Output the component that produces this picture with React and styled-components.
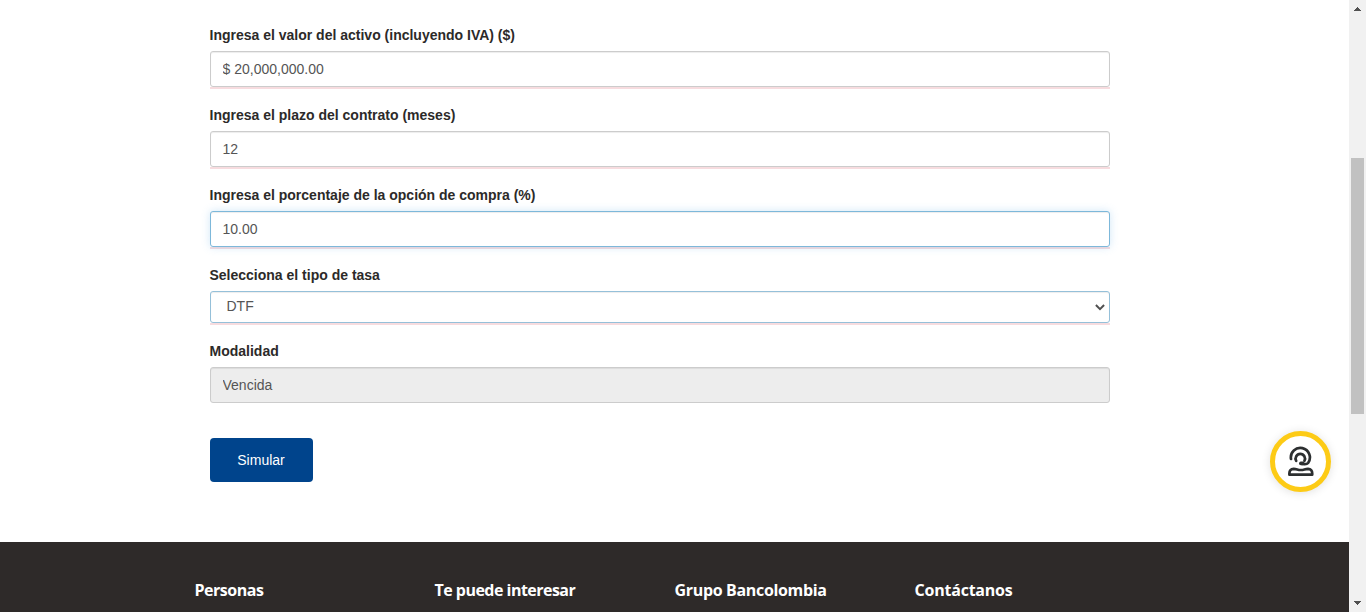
import React from "react";
import styled, { createGlobalStyle } from "styled-components";

const GlobalStyle = createGlobalStyle`
  * { box-sizing: border-box; }
  html, body { margin: 0; height: 612px; overflow: hidden; background: #fff; }
  body { font-family: "Liberation Sans", Arial, sans-serif; font-size: 14px; line-height: 20px; }
`;

const Screen = styled.div`
  display: flex;
  width: 1366px;
  height: 612px;
  overflow: hidden;
`;

const Page = styled.div`
  width: 1349px;
  height: 612px;
  display: flex;
  flex-direction: column;
`;

const Form = styled.form`
  height: 542px;
  width: 1109.5px;
  padding: 25px 0 0 209.5px;
`;

const Field = styled.div`
  margin-bottom: ${(p) => (p.$last ? 0 : 16)}px;
`;

const Label = styled.label`
  display: block;
  height: 26px;
  line-height: 20px;
  font-weight: 700;
  color: #2c2a29;
  white-space: nowrap;
`;

const Underline = styled.div`
  position: relative;
  border-bottom: 2px solid ${(p) => (p.$plain ? "transparent" : "#f7dcdf")};
`;

const control = `
  display: block;
  width: 100%;
  margin: 0;
  border-radius: 3px;
  font-family: "Liberation Sans", Arial, sans-serif;
  font-size: 14px;
  color: #555;
  outline: none;
`;

const Input = styled.input`
  ${control}
  height: 36px;
  padding: 6px 12px;
  background: ${(p) => (p.disabled ? "#ededed" : "#fff")};
  border: 1px solid ${(p) => (p.$active ? "#7db8da" : "#ccc")};
  box-shadow: inset 0 1px 1px rgba(0, 0, 0, 0.075)
    ${(p) => (p.$active ? ", 0 0 8px rgba(102, 175, 233, 0.3)" : "")};
`;

const Select = styled.select`
  ${control}
  appearance: none;
  height: 32px;
  padding: 0 0 2px 16px;
  background: #fff;
  border: 1px solid #95c0d9;
  box-shadow: inset 0 1px 1px rgba(0, 0, 0, 0.075);
`;

const Chevron = styled.svg`
  position: absolute;
  right: 4px;
  top: 11px;
  width: 12px;
  height: 10px;
  pointer-events: none;
`;

const Submit = styled.button`
  display: block;
  width: 103px;
  height: 44px;
  margin: 33px 0 0;
  padding: 0;
  border: 0;
  border-radius: 4px;
  background: #00448c;
  color: #fff;
  font: 14px "Liberation Sans", Arial, sans-serif;
`;

const Footer = styled.footer`
  height: 70px;
  padding: 36px 0 0 194.5px;
  display: grid;
  grid-template-columns: repeat(4, 240px);
  background: #2e2a29;
`;

const FooterTitle = styled.h4`
  margin: 0;
  font: 700 16px/24px "Open Sans", "Noto Sans", sans-serif;
  color: #fff;
  white-space: nowrap;
  letter-spacing: ${(p) => p.$tracking}px;
`;

const Scrollbar = styled.div`
  width: 17px;
  height: 612px;
  background: #f1f1f1;
  display: flex;
  flex-direction: column;
  align-items: center;
`;

const ArrowIcon = styled.svg`
  display: block;
  width: 17px;
  height: 17px;
`;

const Track = styled.div`
  flex: 1;
  width: 13px;
  padding-top: 141px;
`;

const Thumb = styled.div`
  height: 256px;
  background: #c1c1c1;
`;

const ChatButton = styled.div`
  position: absolute;
  left: 1270px;
  top: 431px;
  width: 61px;
  height: 61px;
  border-radius: 50%;
  border: 5px solid #fdcb16;
  background: #fff;
  box-shadow: 0 1px 10px rgba(0, 0, 0, 0.12);
  display: flex;
  align-items: center;
  justify-content: center;
`;

const AgentIcon = () => (
  <svg width="31" height="31" viewBox="0 0 31 31" fill="none" stroke="#2c2f30" strokeWidth="2.7" strokeLinecap="round" strokeLinejoin="round">
    <path d="M6 13a9.5 9.5 0 1 1 17.2 3.8q-1.3 1.5-4 1.3l-3.4-.4" />
    <path d="M11.2 14.9a4.7 4.7 0 1 1 8.2 0" />
    <path d="M15.9 17.4h1.8" strokeWidth="3.6" />
    <path d="M4.4 28.7v-1.4q0-4.1 4.3-4.4c3.4 0 3.6 1.1 7.1 1.1s3.8-1.1 7.2-1.1q4.2.3 4.2 4.4v1.4Z" />
  </svg>
);

const footerTitles = [
  ["Personas", -0.48],
  ["Te puede interesar", -0.52],
  ["Grupo Bancolombia", -0.33],
  ["Contáctanos", -0.22],
];

export default function App() {
  return (
    <>
      <GlobalStyle />
      <Screen>
        <Page>
          <Form>
            <Field>
              <Label>Ingresa el valor del activo (incluyendo IVA) ($)</Label>
              <Underline><Input readOnly value="$ 20,000,000.00" /></Underline>
            </Field>
            <Field>
              <Label>Ingresa el plazo del contrato (meses)</Label>
              <Underline><Input readOnly value="12" /></Underline>
            </Field>
            <Field>
              <Label>Ingresa el porcentaje de la opción de compra (%)</Label>
              <Underline><Input $active readOnly value="10.00" /></Underline>
            </Field>
            <Field>
              <Label>Selecciona el tipo de tasa</Label>
              <Underline>
                <Select defaultValue="DTF"><option>DTF</option></Select>
                <Chevron viewBox="0 0 12 10" fill="none" stroke="#505050" strokeWidth="2">
                  <path d="M1.9 3l4.1 4.1L10.1 3" />
                </Chevron>
              </Underline>
            </Field>
            <Field $last>
              <Label>Modalidad</Label>
              <Underline $plain><Input disabled value="Vencida" /></Underline>
            </Field>
            <Submit type="button">Simular</Submit>
          </Form>
          <Footer>
            {footerTitles.map(([title, tracking]) => (
              <FooterTitle key={title} $tracking={tracking}>{title}</FooterTitle>
            ))}
          </Footer>
        </Page>
        <Scrollbar>
          <ArrowIcon viewBox="0 0 17 17" shapeRendering="crispEdges">
            <path d="M5 11h7v-1h-1v-1h-1v-1h-1v-1h-1v1h-1v1h-1v1h-1z" fill="#505050" />
          </ArrowIcon>
          <Track><Thumb /></Track>
          <ArrowIcon viewBox="0 0 17 17" shapeRendering="crispEdges">
            <path d="M5 6h7v1h-1v1h-1v1h-1v1h-1v-1h-1v-1h-1v-1h-1z" fill="#505050" />
          </ArrowIcon>
        </Scrollbar>
        <ChatButton><AgentIcon /></ChatButton>
      </Screen>
    </>
  );
}
